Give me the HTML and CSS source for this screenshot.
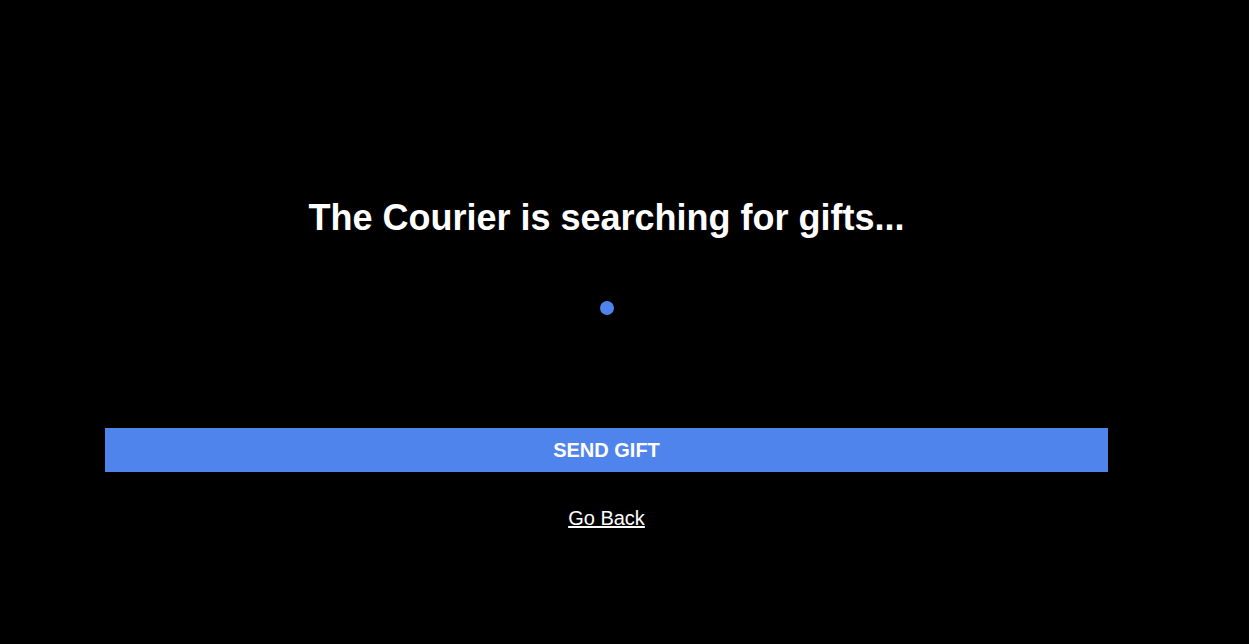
FILE: index.html
```html
<!DOCTYPE html>
<html lang="en">
<head>
<meta charset="utf-8">
<title>The Courier</title>
<link rel="stylesheet" href="styles.css">
</head>
<body>
<main class="page">
  <h1 class="title">The Courier is searching for gifts...</h1>
  <div class="loader"><span class="dot"></span></div>
  <button class="send-btn" type="button">SEND GIFT</button>
  <div class="back"><a href="#" class="back-link">Go Back</a></div>
</main>
</body>
</html>
```
FILE: styles.css
```css
html, body {
  margin: 0;
  padding: 0;
  background: #000;
  height: 100%;
}
body {
  font-family: "Liberation Sans", Arial, sans-serif;
  color: #fff;
}
.page {
  width: 1003px;
  margin-left: 105px;
  padding-top: 197px;
  display: flex;
  flex-direction: column;
  align-items: stretch;
}
.title {
  margin: 0;
  font-size: 36px;
  line-height: 41px;
  font-weight: 700;
  text-align: center;
}
.loader {
  display: flex;
  justify-content: center;
  margin-top: 63px;
  height: 14px;
}
.dot {
  width: 14px;
  height: 14px;
  border-radius: 50%;
  background: #4f84ec;
}
.send-btn {
  margin-top: 113px;
  height: 44px;
  border: 0;
  background: #4f84ec;
  color: #fff;
  font-family: "Liberation Sans", Arial, sans-serif;
  font-size: 20px;
  font-weight: 700;
  padding: 0;
  cursor: pointer;
}
.back {
  margin-top: 35px;
  text-align: center;
  font-size: 20px;
  line-height: 23px;
}
.back-link {
  color: #fff;
  text-decoration: underline;
}
```
